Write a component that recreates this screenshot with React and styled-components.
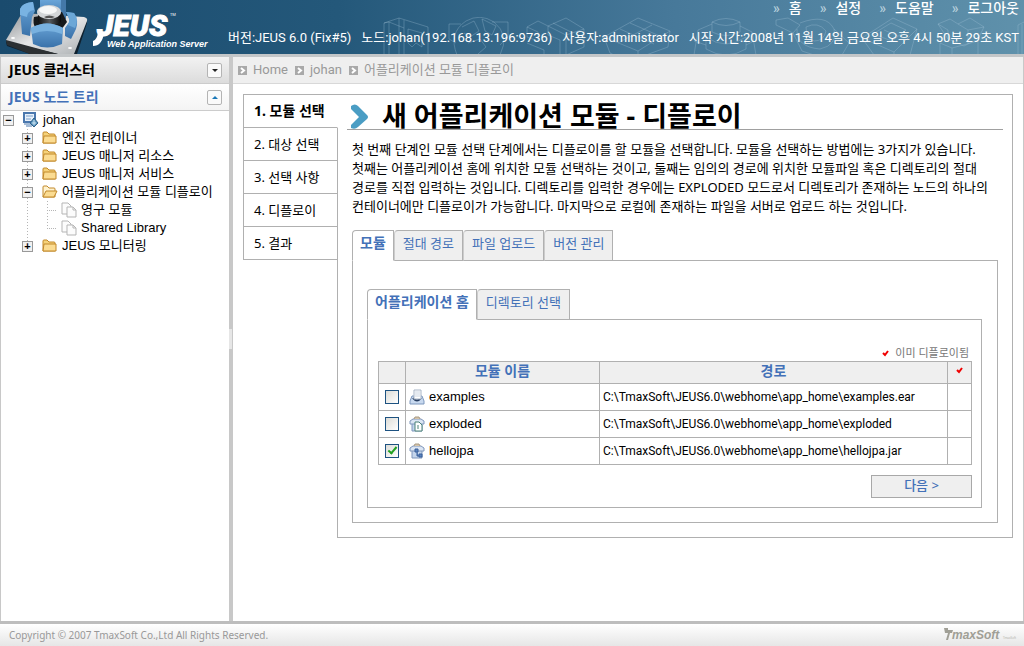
import React, { useState } from 'react';
import styled, { createGlobalStyle } from 'styled-components';

const GlobalStyle = createGlobalStyle`
    *, *::before, *::after {
        box-sizing: border-box;
    }

    body {
        margin: 0;
        background: #fff;
        color: #000;
        font-family: "Noto Sans", "Noto Sans CJK KR", sans-serif;
        font-size: 13px;
    }

    ul, ol, h1, h2, p {
        margin: 0;
        padding: 0;
        list-style: none;
    }

    button, input {
        font: inherit;
        margin: 0;
        padding: 0;
    }

    a {
        color: inherit;
        text-decoration: none;
    }
`;

const menu = ['홈', '설정', '도움말', '로그아웃'];

const serverInfo = [
    '버전:JEUS 6.0 (Fix#5)',
    '노드:johan(192.168.13.196:9736)',
    '사용자:administrator',
    '시작 시간:2008년 11월 14일 금요일 오후 4시 50분 29초 KST',
];

const crumbs = ['Home', 'johan', '어플리케이션 모듈 디플로이'];

const nodes = [
    { name: '엔진 컨테이너' },
    { name: 'JEUS 매니저 리소스' },
    { name: 'JEUS 매니저 서비스' },
    { name: '어플리케이션 모듈 디플로이', children: ['영구 모듈', 'Shared Library'] },
    { name: 'JEUS 모니터링' },
];

const steps = ['모듈 선택', '대상 선택', '선택 사항', '디플로이', '결과'];
const sourceTabs = ['모듈', '절대 경로', '파일 업로드', '버전 관리'];
const homeTabs = ['어플리케이션 홈', '디렉토리 선택'];

const modules = [
    { name: 'examples', file: 'examples.ear', kind: 'ear' },
    { name: 'exploded', file: 'exploded', kind: 'dir' },
    { name: 'hellojpa', file: 'hellojpa.jar', kind: 'jar' },
];

const JeusLogo = () => (
    <svg width="220" height="54" viewBox="0 0 220 54" role="img" aria-label="JEUS Web Application Server">
        <defs>
            <linearGradient id="plate" x1="0" y1="0" x2="1" y2="1">
                <stop offset="0" stopColor="#8d9093" />
                <stop offset="0.5" stopColor="#e6e7e8" />
                <stop offset="1" stopColor="#aaaeb1" />
            </linearGradient>
            <linearGradient id="block" x1="0" y1="0" x2="0" y2="1">
                <stop offset="0" stopColor="#6aa5d8" />
                <stop offset="1" stopColor="#3a72aa" />
            </linearGradient>
            <linearGradient id="drum" x1="0" y1="0" x2="1" y2="0">
                <stop offset="0" stopColor="#111" />
                <stop offset="0.5" stopColor="#55595c" />
                <stop offset="1" stopColor="#0c0c0c" />
            </linearGradient>
        </defs>
        <path d="M6 42 L24 15 L86 18 Q88 20 87 23 L77 54 H30 L7 46 Z" fill="#10212e" />
        <path d="M6 40 L22 13 L84 17 Q88 18 87 21 L74 54 H58 L8 42 Z" fill="url(#plate)" />
        <path d="M6 40 L58 54 H30 L7 45 Z" fill="#2c3033" />
        <ellipse cx="13" cy="38" rx="2" ry="1" fill="#fff" />
        <ellipse cx="70" cy="48" rx="2" ry="1" fill="#fff" />
        <path d="M40 0 H66 V19 L58 20 L40 8 Z" fill="url(#block)" />
        <path d="M61 0 H66 V18 L61 16 Z" fill="#4478a8" />
        <path d="M20 9 Q22 3 33 2 L35 11 L32 17 L30 36 L22 34 Z" fill="url(#block)" />
        <path d="M20 9 Q22 3 33 2 L34 10 Q27 11 27 17 L20 15 Z" fill="#79b3e2" />
        <path d="M66 12 L74 13 Q79 20 76 29 L71 39 L65 36 V28 L70 21 Z" fill="url(#block)" />
        <path d="M66 12 L74 13 Q79 20 75 28 L68 25 Q71 19 66 12 Z" fill="#6ba7d7" />
        <path d="M34 17 Q31 30 45 33 L61 30 L67 22 L62 12 Z" fill="#16191b" />
        <path d="M38 12 V22 Q49 30 61 22 V12 Z" fill="url(#drum)" />
        <ellipse cx="49" cy="12" rx="12" ry="7" fill="#d3d6d8" />
        <ellipse cx="48" cy="10" rx="9" ry="4" fill="#f6f7f7" />
        <path d="M44 17 Q49 14 55 17 L52 18 H46 Z" fill="#555" />
        <path d="M31 28 Q47 19 63 28 L62 44 Q47 51 33 44 Z" fill="url(#block)" />
        <path d="M31 28 Q47 19 63 28 L62 34 Q47 28 32 34 Z" fill="#78b1df" />
        <LogoText x="97" y="36" fontSize="30">JEUS</LogoText>
        <path d="M98 32 L104 33 Q102 46 93 46 V41 Q97 40 98 32 Z" fill="#fff" />
        <text x="170" y="16" fontSize="4" fill="#fff">TM</text>
        <LogoCaption x="107" y="47" fontSize="9">Web Application Server</LogoCaption>
    </svg>
);

const HeaderArt = () => (
    <svg width="680" height="38" viewBox="0 0 680 38" fill="none" stroke="#a9c8d9" strokeOpacity="0.3" aria-hidden="true">
        <path d="M40 38 V6 L55 1 L84 10 V38 M45 38 V5 M55 1 V38 M60 3 V38 M40 6 L45 5 L60 11 M64 12 L78 16 V30 L72 26 L68 30 L64 26 Z" />
        <path d="M105 7 H117 M105 7 V22 L112 26 M148 5 H164 V20 L156 28 M113 38 Q104 16 122 4 Q136 -4 150 5 Q166 18 156 38 M118 10 L130 4 L135 14 L126 20 L120 16 M138 2 L152 9 L148 18 L141 14 Z M124 26 L136 22 L142 30 L134 37" />
        <path d="M183 10 L194 4 L204 9 V18 L216 23 V38 M183 10 L194 15 V24 L183 20 Z M204 9 L222 1 L240 12 V30 L222 38 M204 9 L222 18 L240 12 M222 18 V38 M183 26 L200 33 V38 M209 6 L229 16" />
        <path d="M260 20 L294 1 L326 14 L324 30 L302 38 M260 20 L266 36 L270 38 M260 20 L294 34 L326 14 M276 12 L310 27 M286 6 L318 20 M294 34 V38 M274 26 L308 8" />
        <path d="M368 5 Q382 -2 396 5 V15 Q382 22 368 15 Z M368 5 Q382 12 396 5 M354 13 L368 7 M354 13 L350 38 M396 9 L408 15 L412 38 M362 20 Q382 34 402 20 V32 Q382 44 362 32 Z M350 24 L362 28 M402 28 L410 24" />
        <path d="M432 3 L444 1 L456 8 L449 16 L432 8 Z M456 6 Q482 -4 490 12 Q494 28 476 32 Q452 30 453 12 M490 12 L505 26 L498 38 M449 16 L458 34 L470 38 M462 10 Q474 4 482 14 Q480 24 470 24 Q462 20 462 10" />
        <path d="M518 21 L549 1 L573 12 L566 38 M518 21 L530 38 M518 21 L550 35 L573 12 M529 17 L547 6 L562 13 L548 24 Z M540 13 L554 19 M550 35 V38" />
        <path d="M594 7 L606 2 L614 7 L626 1 L640 10 L634 22 L620 29 L604 22 Z M594 7 L604 13 V22 M614 7 L624 13 L640 10 M624 13 V27 M596 26 L608 31 L634 24 V38 M596 26 V38 M608 31 V38" />
        <path d="M674 8 L680 5 M674 8 V38 M678 7 V38" />
    </svg>
);

const ServerIcon = () => (
    <svg width="16" height="16" viewBox="0 0 16 16" aria-hidden="true">
        <path d="M1 1 H12 V10 H1 Z" fill="#e8f1fa" stroke="#4b78ae" strokeWidth="2" />
        <path d="M3 4 H10 M3 7 H8" stroke="#7aa0cc" />
        <path d="M1 12 H8 M3 14 H9" stroke="#4b78ae" />
        <path d="M11 6 L15 11 L11 15 L7 11 Z" fill="#5d97bd" stroke="#2f6089" />
        <path d="M11 8 V13 M9 11 H13" stroke="#cfe4f2" />
    </svg>
);

const FolderIcon = ({ open }) => (
    <svg width="16" height="14" viewBox="0 0 16 14" aria-hidden="true">
        <path d="M1 12 V2 Q1 1 2 1 H5 L7 3 H12 Q13 3 13 4 V12 Z" fill={open ? '#fff3cf' : '#f5d27a'} stroke="#c2892a" />
        {open
            ? <path d="M1 12 L4 6 H15 L12 12 Z" fill="#fbdc92" stroke="#c2892a" />
            : <path d="M1 12 L2 5 H14 V12 Z" fill="#fbdc92" stroke="#c2892a" />}
    </svg>
);

const PagesIcon = () => (
    <svg width="16" height="16" viewBox="0 0 16 16" fill="#fcfcfc" stroke="#b5b5b5" aria-hidden="true">
        <path d="M1 1 H7 L10 4 V12 H1 Z" />
        <path d="M6 5 H12 L15 8 V15 H6 Z" />
        <path d="M12 5 V8 H15" fill="none" />
    </svg>
);

const ModuleIcon = ({ kind }) => (
    <svg width="16" height="16" viewBox="0 0 16 16" aria-hidden="true">
        {kind === 'ear' ? (
            <>
                <path d="M3 7 L1 12 V15 H15 V12 L13 7 Z" fill="#c8d9ef" stroke="#7c97bd" />
                <path d="M4 9 Q8 14 12 9" fill="none" stroke="#273d60" strokeWidth="2" />
                <path d="M5 1 H12 V10 H5 Z" fill="#fff" stroke="#a7b4c6" />
                <path d="M6 3 H11 M6 5 H11 M6 7 H11" stroke="#cbd5e2" />
            </>
        ) : (
            <>
                <path d="M3 6 H13 V15 H3 Z" fill="#c4d5ec" stroke="#7f96bb" />
                <path d="M1 5 L4 3 H12 L15 5 V8 H1 Z" fill="#dbe5f3" stroke="#7f96bb" />
                <path d="M5 3 L6 1 H10 L11 3" fill="#d6c5aa" stroke="#a79a85" />
                {kind === 'dir'
                    ? <path d="M6 6 H10 L13 9 V15 H6 Z M9 9 V13" fill="#fff" stroke="#4c8378" />
                    : <path d="M6 6 H9 V9 H6 Z M10 11 H13 V14 H10 Z M8 9 V13 H10" fill="#5c86c0" stroke="#395f99" />}
            </>
        )}
    </svg>
);

const RedCheck = () => (
    <svg width="7" height="7" viewBox="0 0 7 7" aria-hidden="true">
        <path d="M1 3 L3 5 L6 1" fill="none" stroke="#f00000" strokeWidth="2" />
    </svg>
);

const CrumbIcon = () => (
    <svg width="9" height="9" viewBox="0 0 9 9" aria-hidden="true">
        <path d="M0 0 H9 V9 H0 Z" fill="#a9a9a9" />
        <path d="M3 2 L6 4.5 L3 7" fill="none" stroke="#fff" strokeWidth="2" />
    </svg>
);

const TitleArrow = () => (
    <svg width="18" height="25" viewBox="0 0 18 25" aria-hidden="true">
        <path d="M0 2 Q4 -1 7 2 L16 11 Q18 13 16 15 L7 23 Q4 26 0 24 V21 L8 13 L0 5 Z" fill="#4a9dc4" />
    </svg>
);

const TmaxLogo = () => (
    <svg width="76" height="16" viewBox="0 0 76 16" role="img" aria-label="TmaxSoft">
        <path d="M1 1 H5 V3 H10 L9 6 H7 L5 13 H3 L5 6 H2 Z" fill="#a09f96" />
        <FooterLogoText x="9" y="12" fontSize="12">maxSoft</FooterLogoText>
        <text x="60" y="12" fontSize="3" fill="#b5b4ad">TmaxSoft</text>
    </svg>
);

const Tabs = ({ items, label }) => {
    const [active, setActive] = useState(items[0]);

    return (
        <TabList role="tablist" aria-label={label}>
            {items.map((item) => (
                <Tab key={item} type="button" role="tab" aria-selected={item === active} $active={item === active} onClick={() => setActive(item)}>
                    {item}
                </Tab>
            ))}
        </TabList>
    );
};

const Sidebar = () => (
    <SidebarContainer>
        <SectionHeader>
            <h2>JEUS 클러스터</h2>
            <SectionButton type="button" aria-label="JEUS 클러스터 펼치기"><Triangle /></SectionButton>
        </SectionHeader>
        <SectionHeader $open>
            <h2>JEUS 노드 트리</h2>
            <SectionButton type="button" aria-label="JEUS 노드 트리 접기"><Triangle $up /></SectionButton>
        </SectionHeader>
        <Tree>
            <li>
                <TreeRow>
                    <Toggle type="button" aria-label="johan">−</Toggle>
                    <TreeLink href="#"><ServerIcon />johan</TreeLink>
                </TreeRow>
                <Branch>
                    {nodes.map((node) => (
                        <li key={node.name}>
                            <TreeRow $level={1}>
                                <Toggle type="button" aria-label={node.name}>{node.children ? '−' : '+'}</Toggle>
                                <TreeLink href="#"><FolderIcon open={!!node.children} />{node.name}</TreeLink>
                            </TreeRow>
                            {node.children && (
                                <Leaves>
                                    {node.children.map((child) => (
                                        <TreeRow as="li" key={child} $level={2}>
                                            <Twig />
                                            <TreeLink href="#"><PagesIcon />{child}</TreeLink>
                                        </TreeRow>
                                    ))}
                                </Leaves>
                            )}
                        </li>
                    ))}
                </Branch>
            </li>
        </Tree>
    </SidebarContainer>
);

const ModuleTable = () => {
    const [checked, setChecked] = useState(['hellojpa']);

    const toggle = (name) => {
        setChecked(checked.includes(name) ? checked.filter((n) => n !== name) : [...checked, name]);
    };

    return (
        <Table>
            <colgroup>
                <col width="27" />
                <col width="194" />
                <col />
                <col width="24" />
            </colgroup>
            <thead>
                <tr>
                    <th aria-label="선택" />
                    <th>모듈 이름</th>
                    <th>경로</th>
                    <th aria-label="이미 디플로이됨"><RedCheck /></th>
                </tr>
            </thead>
            <tbody>
                {modules.map(({ name, file, kind }) => (
                    <tr key={name}>
                        <td>
                            <Checkbox type="checkbox" id={name} checked={checked.includes(name)} onChange={() => toggle(name)} />
                        </td>
                        <td>
                            <ModuleName htmlFor={name}><ModuleIcon kind={kind} />{name}</ModuleName>
                        </td>
                        <td>{'C:\\TmaxSoft\\JEUS6.0\\webhome\\app_home\\' + file}</td>
                        <td />
                    </tr>
                ))}
            </tbody>
        </Table>
    );
};

const App = () => (
    <Page>
        <GlobalStyle />
        <Header>
            <JeusLogo />
            <ArtLayer><HeaderArt /></ArtLayer>
            <HeaderRight>
                <Menu>
                    {menu.map((item) => <MenuLink href="#" key={item}>{item}</MenuLink>)}
                </Menu>
                <Info>
                    {serverInfo.map((item) => <span key={item}>{item}</span>)}
                </Info>
            </HeaderRight>
        </Header>
        <Body>
            <Sidebar />
            <Splitter />
            <Main>
                <Breadcrumb>
                    {crumbs.map((crumb) => <a href="#" key={crumb}><CrumbIcon />{crumb}</a>)}
                </Breadcrumb>
                <Wizard>
                    <Steps>
                        {steps.map((step, i) => <Step key={step} $active={i === 0}>{i + 1}. {step}</Step>)}
                    </Steps>
                    <Panel>
                        <Title><TitleArrow />새 어플리케이션 모듈 - 디플로이</Title>
                        <Description>
                            첫 번째 단계인 모듈 선택 단계에서는 디플로이를 할 모듈을 선택합니다. 모듈을 선택하는 방법에는 3가지가 있습니다.<br />
                            첫째는 어플리케이션 홈에 위치한 모듈 선택하는 것이고, 둘째는 임의의 경로에 위치한 모듈파일 혹은 디렉토리의 절대<br />
                            경로를 직접 입력하는 것입니다. 디렉토리를 입력한 경우에는 EXPLODED 모드로서 디렉토리가 존재하는 노드의 하나의<br />
                            컨테이너에만 디플로이가 가능합니다. 마지막으로 로컬에 존재하는 파일을 서버로 업로드 하는 것입니다.
                        </Description>
                        <Tabs items={sourceTabs} label="모듈 위치" />
                        <TabPanel>
                            <Tabs items={homeTabs} label="디렉토리" />
                            <HomePanel>
                                <Legend><RedCheck />이미 디플로이됨</Legend>
                                <ModuleTable />
                                <NextButton type="button">다음 &gt;</NextButton>
                            </HomePanel>
                        </TabPanel>
                    </Panel>
                </Wizard>
            </Main>
        </Body>
        <Footer>
            <span>Copyright © 2007 TmaxSoft Co.,Ltd All Rights Reserved.</span>
            <TmaxLogo />
        </Footer>
    </Page>
);

export default App;


const Page = styled.div`
    display: flex;
    flex-direction: column;
    min-height: 100vh;
`;

const Header = styled.header`
    position: relative;
    display: flex;
    justify-content: space-between;
    height: 57px;
    overflow: hidden;
    background: linear-gradient(90deg, #1a4b6e 0%, #24587a 33%, #47799a 66%, #5f91ab 100%);
    border-bottom: 3px solid #c3c6c8;
    color: #fff;
`;

const LogoText = styled.text`
    fill: #fff;
    stroke: #fff;
    font-family: Roboto, sans-serif;
    font-weight: 900;
    font-style: italic;
`;

const LogoCaption = styled.text`
    fill: #fff;
    font-family: "Liberation Sans", sans-serif;
    font-weight: bold;
    font-style: italic;
`;

const ArtLayer = styled.div`
    position: absolute;
    right: 0;
    bottom: 0;
    height: 37px;
`;

const HeaderRight = styled.div`
    position: relative;
    display: flex;
    flex-direction: column;
    gap: 12px;
    padding-right: 5px;
    font-family: Roboto, "Noto Sans CJK KR", sans-serif;
    white-space: nowrap;
`;

const Menu = styled.nav`
    display: flex;
    justify-content: flex-end;
    gap: 18px;
    line-height: 16px;
`;

const MenuLink = styled.a`
    font-size: 14px;
    font-weight: 500;

    &::before {
        content: "»";
        margin-right: 9px;
        color: #b8d0dd;
    }
`;

const Info = styled.div`
    display: flex;
    justify-content: flex-end;
    gap: 10px;
    line-height: 20px;
`;

const Body = styled.div`
    display: flex;
    flex: 1;
    border: solid #c8c8c8;
    border-width: 0 1px;
`;

const SidebarContainer = styled.aside`
    flex: 0 0 228px;
`;

const Splitter = styled.div`
    display: flex;
    align-items: center;
    width: 4px;
    background: #c8c8c8;

    &::after {
        content: "";
        width: 3px;
        height: 20px;
        background: #e6e6e6;
    }
`;

const SectionHeader = styled.div`
    display: flex;
    align-items: center;
    justify-content: space-between;
    height: 27px;
    padding: 0 7px 0 8px;
    background: ${({ $open }) => ($open ? 'linear-gradient(#fff, #f4f4f4)' : 'linear-gradient(#f2f2f2, #dcdcdc)')};
    border-bottom: 1px solid #ccc;
    color: ${({ $open }) => ($open ? '#4371b8' : '#000')};

    h2 {
        font-size: 14px;
        font-weight: bold;
        line-height: 20px;
    }
`;

const SectionButton = styled.button`
    display: flex;
    align-items: center;
    justify-content: center;
    width: 15px;
    height: 15px;
    background: #fafafa;
    border: 1px solid #b4b4b4;
    border-radius: 2px;
`;

const Triangle = styled.span`
    border: solid transparent;
    border-width: ${({ $up }) => ($up ? '0 3px 3px' : '3px 3px 0')};
    border-${({ $up }) => ($up ? 'bottom' : 'top')}-color: ${({ $up }) => ($up ? '#1a78b8' : '#222')};
`;

const Tree = styled.ul`
    font-family: "Liberation Sans", "Noto Sans CJK KR", sans-serif;
`;

const TreeRow = styled.div`
    display: flex;
    align-items: center;
    height: 18px;
    padding-left: ${({ $level }) => [2, 21, 46][$level || 0]}px;
    gap: ${({ $level }) => ($level === 2 ? 5 : 9)}px;
`;

const Toggle = styled.button`
    display: flex;
    align-items: center;
    justify-content: center;
    width: 11px;
    height: 11px;
    background: #f1f1f1;
    border: 1px solid #999;
    font-size: 11px;
    font-weight: bold;
    line-height: 9px;
`;

const TreeLink = styled.a`
    display: flex;
    align-items: center;
    gap: 4px;
    line-height: 18px;
    white-space: nowrap;
`;

const dots = 'repeating-linear-gradient(#b5b5b5 0 1px, transparent 1px 3px)';

const Branch = styled.ul`
    background: ${dots} 26px 0 / 1px calc(100% - 9px) no-repeat;
`;

const Leaves = styled.ul`
    background: ${dots} 46px 0 / 1px calc(100% - 9px) no-repeat;
`;

const Twig = styled.span`
    width: 9px;
    border-top: 1px dotted #b5b5b5;
`;

const Main = styled.main`
    flex: 1;
    min-width: 0;
`;

const Breadcrumb = styled.nav`
    display: flex;
    align-items: center;
    gap: 7px;
    height: 27px;
    padding-left: 5px;
    background: #efefef;
    border-bottom: 1px solid #d8d8d8;
    color: #999;
    font-family: Roboto, "Noto Sans CJK KR", sans-serif;
    line-height: 16px;

    a {
        display: flex;
        align-items: center;
        gap: 6px;
    }
`;

const Wizard = styled.section`
    display: flex;
    margin: 10px 10px 0;
`;

const Steps = styled.ol`
    flex: 0 0 95px;
    align-self: flex-start;
    border-left: 1px solid #b0b0b0;
    border-top: 1px solid #b0b0b0;
`;

const Step = styled.li`
    height: 33px;
    padding-left: 10px;
    border-bottom: 1px solid #b0b0b0;
    border-right: 1px solid ${({ $active }) => ($active ? '#fff' : '#b0b0b0')};
    font-size: ${({ $active }) => ($active ? 14 : 13)}px;
    font-weight: ${({ $active }) => ($active ? 'bold' : 'normal')};
    line-height: 32px;
`;

const Panel = styled.div`
    flex: 1;
    min-width: 0;
    margin-left: -1px;
    padding: 8px 14px 14px 15px;
    border: 1px solid #b0b0b0;
    border-left: none;
    background: linear-gradient(#b0b0b0, #b0b0b0) 0 33px / 1px 100% no-repeat;
`;

const Title = styled.h1`
    display: flex;
    align-items: center;
    gap: 13px;
    height: 27px;
    margin: 0 -5px;
    padding-left: 4px;
    border-bottom: 1px solid #a0a0a0;
    font-size: 27px;
    font-weight: bold;
    line-height: 26px;
    white-space: nowrap;
`;

const Description = styled.p`
    padding: 10px 0 14px;
    line-height: 19px;
    white-space: nowrap;
`;

const TabList = styled.div`
    display: flex;
`;

const Tab = styled.button`
    height: 31px;
    padding: ${({ $active }) => ($active ? '0 7px 5px' : '0 8px 5px')};
    margin-bottom: -1px;
    background: ${({ $active }) => ($active ? '#fff' : '#efefef')};
    border: 1px solid #b0b0b0;
    border-bottom-color: ${({ $active }) => ($active ? '#fff' : '#b0b0b0')};
    border-top-left-radius: 4px;
    color: #4371b8;
    font-size: ${({ $active }) => ($active ? 14 : 13)}px;
    font-weight: ${({ $active }) => ($active ? 'bold' : 'normal')};
    line-height: 20px;
    white-space: nowrap;
    cursor: pointer;

    & + & {
        border-left-color: #ccc;
    }
`;

const TabPanel = styled.div`
    padding: 28px 15px 14px 14px;
    border: 1px solid #b0b0b0;
`;

const HomePanel = styled.div`
    display: flex;
    flex-direction: column;
    padding: 25px 9px 9px 10px;
    border: 1px solid #b0b0b0;
`;

const Legend = styled.div`
    display: flex;
    align-items: center;
    justify-content: flex-end;
    gap: 6px;
    padding-right: 3px;
    color: #777;
    font-size: 11px;
    line-height: 16px;
`;

const Table = styled.table`
    width: 100%;
    table-layout: fixed;
    border-collapse: collapse;

    th, td {
        padding: 0 3px;
        border: 1px solid #b0b0b0;
        text-align: left;
    }

    th {
        height: 22px;
        padding: 0 0 4px;
        background: #efefef;
        color: #4371b8;
        font-size: 14px;
        font-weight: bold;
        line-height: 17px;
        text-align: center;
    }

    td {
        height: 27px;
        font-family: Roboto, sans-serif;
        font-size: 12px;
        line-height: 20px;
    }

    th > svg, td > input {
        display: block;
        margin: 0 auto;
    }
`;

const Checkbox = styled.input`
    appearance: none;
    width: 14px;
    height: 14px;
    background: linear-gradient(135deg, #dcdcd7, #fff);
    border: 1px solid #1d5281;

    &:checked::before {
        content: "";
        display: block;
        width: 5px;
        height: 9px;
        margin: 0 auto;
        border: solid #21a121;
        border-width: 0 2px 2px 0;
        transform: rotate(40deg);
    }
`;

const ModuleName = styled.label`
    display: flex;
    align-items: center;
    gap: 4px;
    font-family: "Liberation Sans", sans-serif;
    font-size: 13px;
`;

const NextButton = styled.button`
    align-self: flex-end;
    width: 101px;
    height: 23px;
    margin-top: 10px;
    padding-bottom: 3px;
    background: #efefef;
    border: 1px solid #a8a8a8;
    color: #4371b8;
    font-weight: 500;
    line-height: 18px;
`;

const Footer = styled.footer`
    display: flex;
    align-items: center;
    justify-content: space-between;
    height: 25px;
    padding: 0 5px 0 9px;
    border-top: 3px solid #bdbdbd;
    background: linear-gradient(#fff, #e6e6e6);
    color: #999;
    font-size: 10px;
    line-height: 16px;
`;

const FooterLogoText = styled.text`
    fill: #a09f96;
    font-family: "Liberation Sans", sans-serif;
    font-weight: bold;
    font-style: italic;
`;
